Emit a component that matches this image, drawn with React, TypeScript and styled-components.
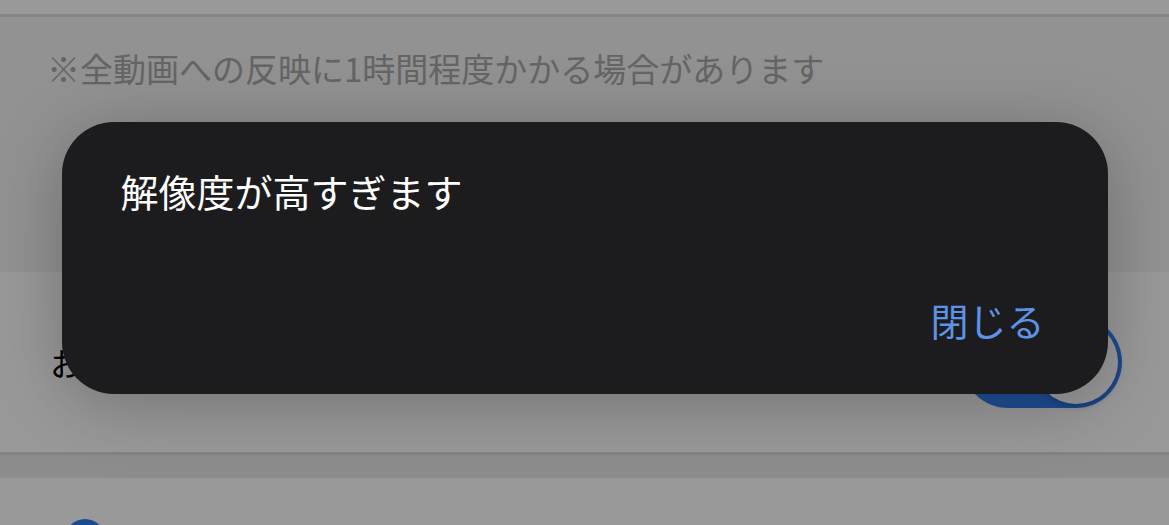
import React from 'react';
import styled, { createGlobalStyle } from 'styled-components';

const GlobalStyle = createGlobalStyle`
  html, body {
    margin: 0;
    padding: 0;
    background: #ffffff;
    font-family: "Noto Sans CJK JP", "Noto Sans", sans-serif;
  }
`;

const Page = styled.div`
  position: relative;
  width: 1169px;
  height: 525px;
  overflow: hidden;
  display: flex;
  flex-direction: column;
`;

const TopBand = styled.div`
  height: 14px;
  flex-shrink: 0;
  background: #ffffff;
  border-bottom: 3px solid #e2e2e2;
`;

const Section = styled.div<{ $height: number; $bg: string }>`
  height: ${(p) => p.$height}px;
  flex-shrink: 0;
  background: ${(p) => p.$bg};
  display: flex;
  align-items: center;
  padding: 0 47px 0 50px;
  box-sizing: border-box;
`;

const NoteSection = styled(Section)`
  align-items: flex-start;
  padding-top: 27px;
  padding-left: 47px;
`;

const Note = styled.div`
  font-size: 33px;
  line-height: 48px;
  color: #a8a8a8;
  white-space: nowrap;
`;

const RowLabel = styled.div`
  flex: 1;
  font-size: 32px;
  color: #000;
  white-space: nowrap;
`;

const Switch = styled.div`
  width: 160px;
  height: 92px;
  border-radius: 46px;
  background: #3380f5;
  display: flex;
  align-items: center;
  justify-content: flex-end;
  padding: 4px;
  box-sizing: border-box;
`;

const Knob = styled.div`
  width: 84px;
  height: 84px;
  border-radius: 50%;
  background: #ffffff;
  box-shadow: 0 3px 6px rgba(0, 0, 0, 0.2);
`;

const Divider = styled.div`
  height: 3px;
  flex-shrink: 0;
  background: #dcdcdc;
`;

const GrayBand = styled.div`
  height: 23px;
  flex-shrink: 0;
  background: #ececec;
`;

const BottomRow = styled.div`
  flex: 1;
  background: #ffffff;
  padding: 41px 0 0 65px;
`;

const Avatar = styled.div`
  width: 40px;
  height: 40px;
  border-radius: 50%;
  background: #2f7cf0;
`;

const Overlay = styled.div`
  position: absolute;
  inset: 0;
  background: rgba(0, 0, 0, 0.4);
  display: flex;
  align-items: center;
  justify-content: center;
  padding-bottom: 9px;
  box-sizing: border-box;
`;

const Dialog = styled.div`
  width: 1046px;
  height: 272px;
  border-radius: 52px;
  background: #1c1c1e;
  box-shadow: 0 10px 70px rgba(0, 0, 0, 0.25);
  box-sizing: border-box;
  padding: 46px 63px 51px 59px;
  display: flex;
  flex-direction: column;
  justify-content: space-between;
`;

const DialogTitle = styled.div`
  font-size: 38px;
  line-height: 46px;
  color: #ffffff;
`;

const DialogButton = styled.button`
  align-self: flex-end;
  border: none;
  background: none;
  padding: 0;
  font-family: inherit;
  font-size: 38px;
  line-height: 46px;
  color: #5e92e6;
  cursor: pointer;
`;

const App: React.FC = () => {
  return (
    <>
      <GlobalStyle />
      <Page>
        <TopBand />
        <NoteSection $height={255} $bg="#f3f3f3">
          <Note>※全動画への反映に1時間程度かかる場合があります</Note>
        </NoteSection>
        <Section $height={180} $bg="#ffffff">
          <RowLabel>おすすめに表示する</RowLabel>
          <Switch>
            <Knob />
          </Switch>
        </Section>
        <Divider />
        <GrayBand />
        <BottomRow>
          <Avatar />
        </BottomRow>
        <Overlay>
          <Dialog>
            <DialogTitle>解像度が高すぎます</DialogTitle>
            <DialogButton>閉じる</DialogButton>
          </Dialog>
        </Overlay>
      </Page>
    </>
  );
};

export default App;
